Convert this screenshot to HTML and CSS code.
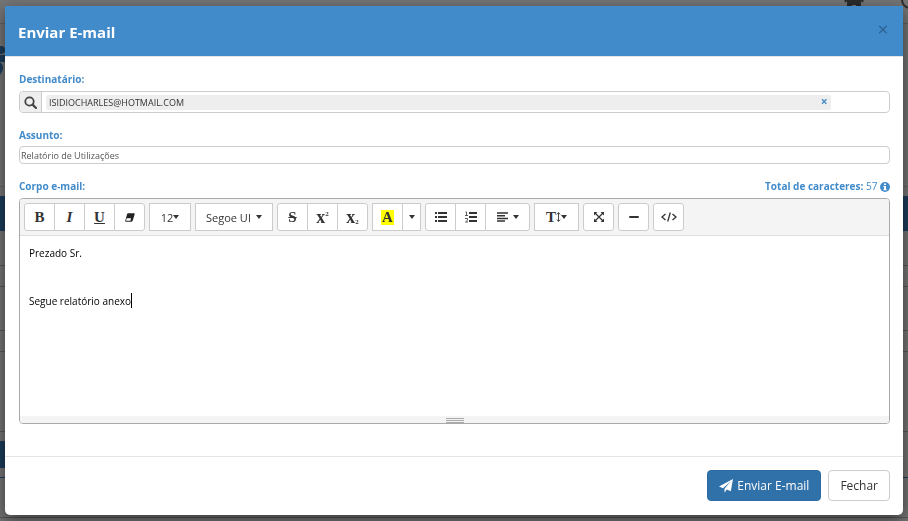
FILE: index.html
```html
<!DOCTYPE html>
<html lang="pt-BR">
<head>
  <meta charset="UTF-8" />
  <meta name="viewport" content="width=device-width, initial-scale=1.0" />
  <title>Enviar E-mail</title>
  <link rel="stylesheet" href="styles.css">
</head>
<body>

  <!-- page behind the modal -->
  <div class="page" aria-hidden="true">
    <div class="page-top">
      <svg class="home-icon" viewBox="0 0 20 18" width="20" height="18"><path d="M10 0 0 9l1.500 1.500L3 9v9h5v-5h4v5h5V9l1.500 1.500L20 9l-3-3V1h-3v2z" fill="#2b2b2b"/></svg>
      <svg class="user-icon" viewBox="0 0 20 20" width="20" height="20"><circle cx="10" cy="10" r="8" fill="none" stroke="#2b2b2b" stroke-width="2"/></svg>
    </div>
    <div class="page-brand">
      <svg viewBox="0 0 8 30" width="8" height="30"><circle cx="1" cy="5" r="4" fill="#1c3c5a"/><path d="M0 10h5v7H0zM0 17q6 5 0 13z" fill="#1c3c5a"/></svg>
    </div>
    <div class="page-bar"></div>
    <div class="page-row row-a"></div>
    <div class="page-row row-b"></div>
    <div class="page-row row-c"></div>
    <div class="page-row row-b"></div>
    <div class="page-row row-d"></div>
    <div class="page-tab"></div>
    <div class="page-row row-e"></div>
    <div class="page-row row-f"></div>
  </div>

  <div class="modal" role="dialog" aria-labelledby="modal-title">
    <div class="modal-header">
      <h4 id="modal-title">Enviar E-mail</h4>
      <button type="button" class="close-btn" aria-label="Fechar">×</button>
    </div>

    <form class="modal-body">
      <label for="destinatario">Destinatário:</label>
      <div class="input-group">
        <span class="addon">
          <svg viewBox="0 0 13 13" width="13" height="13"><circle cx="5.500" cy="5.500" r="4.200" fill="none" stroke="#444" stroke-width="1.800"/><path d="M8.600 8.600 12 12" stroke="#444" stroke-width="2.200" stroke-linecap="round"/></svg>
        </span>
        <div class="tags">
          <div class="tag">
            <span>ISIDIOCHARLES@HOTMAIL.COM</span>
            <button type="button" class="tag-remove" aria-label="Remover">×</button>
          </div>
          <input type="text" id="destinatario">
        </div>
      </div>

      <label for="assunto">Assunto:</label>
      <input type="text" class="subject" id="assunto" value="Relatório de Utilizações">

      <div class="label-row">
        <label for="corpo">Corpo e-mail:</label>
        <p class="counter"><b>Total de caracteres:</b> 57
          <svg viewBox="0 0 10 10" width="10" height="10"><circle cx="5" cy="5" r="5" fill="#428bca"/><path d="M4 1.500h2V3H4zM3.500 4H6v3.200h.7v1H3.400v-1H4V5h-.5z" fill="#fff"/></svg>
        </p>
      </div>

      <div class="editor">
        <div class="toolbar">
          <div class="btn-group">
            <button type="button" class="glyph" title="Negrito">B</button>
            <button type="button" class="glyph" title="Itálico"><i>I</i></button>
            <button type="button" class="glyph" title="Sublinhado"><u>U</u></button>
            <button type="button" title="Remover estilo">
              <svg viewBox="0 0 12 10" width="10" height="9"><path d="M3.500 0H11q1 0 .6 1L9.200 9q-.4 1-1.400 1H1Q0 10 .3 9L2.500 1q.3-1 1-1z" fill="#222"/><path d="M2 6h5.300L6.500 8.800H1.200z" fill="#fff"/></svg>
            </button>
          </div>
          <div class="btn-group square">
            <button type="button" class="size-btn">12<span class="caret"></span></button>
          </div>
          <div class="btn-group square">
            <button type="button" class="font-btn">Segoe UI <span class="caret"></span></button>
          </div>
          <div class="btn-group">
            <button type="button" class="glyph" title="Riscado"><s>S</s></button>
            <button type="button" class="glyph script" title="Sobrescrito">x<sup>2</sup></button>
            <button type="button" class="glyph script" title="Subscrito">x<sub>2</sub></button>
          </div>
          <div class="btn-group square">
            <button type="button" class="glyph" title="Cor"><span class="highlight">A</span></button>
            <button type="button" class="more-btn" title="Mais cores"><span class="caret"></span></button>
          </div>
          <div class="btn-group">
            <button type="button" title="Lista">
              <svg viewBox="0 0 12 10" width="12" height="10"><path d="M0 0h2v2H0zM0 4h2v2H0zM0 8h2v2H0zM3 0h9v2H3zM3 4h9v2H3zM3 8h9v2H3z" fill="#333"/></svg>
            </button>
            <button type="button" title="Lista numerada">
              <svg viewBox="0 0 12 12" width="12" height="12"><path d="M4 1h8v2H4zM4 5h8v2H4zM4 9h8v2H4z" fill="#333"/><path d="M.5 1h1v3.500M0 4.500h3M0 7.500h2.500v1.700L.5 11H3" fill="none" stroke="#333" stroke-width=".8"/></svg>
            </button>
            <button type="button" class="wide-btn" title="Parágrafo">
              <svg viewBox="0 0 12 10" width="12" height="10"><path d="M0 1h11M0 3.700h8M0 6.400h11M0 9h8" stroke="#333" stroke-width="1.500"/></svg>
              <span class="caret spaced"></span>
            </button>
          </div>
          <div class="btn-group square">
            <button type="button" class="glyph wide-btn" title="Altura da linha">T<svg viewBox="0 0 5 10" width="5" height="10"><path d="M2.500 1v8M.8 2.500l1.700-2 1.700 2M.8 7.500l1.700 2 1.700-2" fill="none" stroke="#333" stroke-width=".9"/></svg><span class="caret"></span></button>
          </div>
          <div class="btn-group">
            <button type="button" title="Tela cheia">
              <svg viewBox="0 0 10 10" width="10" height="10"><path d="M1 1l8 8M9 1L1 9" stroke="#333" stroke-width="1.200"/><path d="M0 0h3.400L0 3.400zM10 0v3.400L6.600 0zM0 10V6.600L3.400 10zM10 10H6.600L10 6.600z" fill="#333"/></svg>
            </button>
          </div>
          <div class="btn-group">
            <button type="button" title="Linha horizontal">
              <svg viewBox="0 0 10 10" width="10" height="10"><rect y="4" width="10" height="2" rx="1" fill="#333"/></svg>
            </button>
          </div>
          <div class="btn-group">
            <button type="button" title="Código">
              <svg viewBox="0 0 16 10" width="16" height="10"><path d="M4.500 2 1 5l3.500 3M11.500 2 15 5l-3.500 3M9.300.5l-2.600 9" fill="none" stroke="#333" stroke-width="1.300"/></svg>
            </button>
          </div>
        </div>
        <div class="editable" id="corpo" role="textbox" aria-multiline="true" contenteditable="true">
          <p>Prezado Sr.</p>
          <p><br></p>
          <p>Segue relatório anexo<span class="text-cursor"></span></p>
        </div>
        <div class="statusbar"><span></span><span></span><span></span></div>
      </div>
    </form>

    <div class="modal-footer">
      <button type="button" class="btn btn-primary">
        <svg viewBox="0 0 14 14" width="14" height="14"><path d="M14 0 11.800 12.300 7.800 10.600 5.500 13.800V9.800L11.800 2.300 4 9.200 0 7.600z" fill="#fff"/></svg>
        Enviar E-mail
      </button>
      <button type="button" class="btn">Fechar</button>
    </div>
  </div>

</body>
</html>
```

FILE: styles.css
```css
* {
  margin: 0;
  padding: 0;
  box-sizing: border-box;
}

body {
  min-height: 100vh;
  overflow: hidden;
  background-color: #747474;
  font-family: "Segoe UI", "Open Sans", "Noto Sans", sans-serif;
  font-size: 12px;
  color: #333;
}

button, input {
  font-family: inherit;
  font-size: inherit;
  color: inherit;
}

svg {
  display: block;
  flex: none;
}

/* dimmed page behind the modal */
.page {
  position: fixed;
  inset: 0;
}

.page-top {
  height: 24px;
  border-bottom: 1px solid #606060;
  display: flex;
  justify-content: flex-end;
  align-items: flex-start;
  gap: 36px;
  overflow: hidden;
  margin-right: -12px;
}

.home-icon {
  margin-top: -8px;
}

.user-icon {
  margin-top: -10px;
}

.page-brand {
  height: 163px;
  padding-top: 21px;
  border-bottom: 1px solid #646464;
}

.page-bar {
  height: 35px;
  margin-top: 9px;
  background: #1c3c5a;
}

.page-row {
  border-bottom: 1px solid #565656;
}

.row-a {
  height: 35px;
}

.row-b {
  height: 21px;
}

.row-c {
  height: 44px;
}

.row-d {
  height: 80px;
}

.page-tab {
  width: 50%;
  height: 27px;
  margin-top: 9px;
  background: #1c3c5a;
}

.row-e {
  height: 10px;
  border-color: #1c3c5a;
}

.row-f {
  height: 40px;
}

.modal {
  position: relative;
  margin: 6px 5px;
  background: #fff;
  border-radius: 5px;
  box-shadow: 0 5px 15px rgba(0,0,0,0.5);
}

.modal-header {
  display: flex;
  justify-content: space-between;
  height: 51px;
  padding: 14px 13px;
  background: #428bca;
  border-bottom: 1px solid #e5e5e5;
}

.modal-header h4 {
  font-size: 15px;
  line-height: 24px;
  color: #fff;
}

.close-btn {
  width: 14px;
  height: 18px;
  border: none;
  background: none;
  font-size: 19px;
  line-height: 16px;
  color: #2c6090;
  cursor: pointer;
}

.modal-body {
  padding: 14px 13px 32px 14px;
}

label, .counter {
  display: block;
  font-size: 10px;
  line-height: 16px;
  color: #428bca;
}

label {
  font-weight: bold;
}

.input-group {
  display: flex;
  height: 22px;
  margin: 4px 0 14px;
  border: 1px solid #ccc;
  border-radius: 4px;
  overflow: hidden;
}

.addon {
  display: flex;
  align-items: center;
  justify-content: center;
  width: 22px;
  background: #eee;
  border-right: 1px solid #ccc;
}

.tags {
  flex: 1;
  display: flex;
  align-items: center;
  padding-left: 4px;
}

.tag {
  flex: 27;
  display: flex;
  justify-content: space-between;
  align-items: center;
  height: 15px;
  padding: 0 3px;
  background: #eee;
  border-radius: 2px;
  font-size: 9px;
}

.tag-remove {
  width: 8px;
  border: none;
  background: none;
  font-size: 12px;
  font-weight: bold;
  line-height: 12px;
  color: #428bca;
  cursor: pointer;
}

.tags input {
  flex: 2;
  min-width: 0;
  border: none;
  outline: none;
}

.subject {
  display: block;
  width: 100%;
  height: 18px;
  margin: 3px 0 14px;
  padding: 0 1px;
  border: 1px solid #ccc;
  border-radius: 4px;
  font-size: 9px;
  color: #555;
}

.label-row {
  display: flex;
  justify-content: space-between;
  margin-bottom: 4px;
}

.counter svg {
  display: inline-block;
  vertical-align: -2px;
}

.editor {
  border: 1px solid #a9a9a9;
  border-radius: 4px;
  overflow: hidden;
}

.toolbar {
  display: flex;
  flex-wrap: wrap;
  gap: 4px;
  padding: 4px;
  background: #f4f4f4;
  border-bottom: 1px solid #ddd;
}

.btn-group {
  display: flex;
}

.btn-group button {
  display: flex;
  align-items: center;
  justify-content: center;
  width: 31px;
  height: 28px;
  background: #fff;
  border: 1px solid #ccc;
  font-size: 11px;
  cursor: pointer;
}

.btn-group button + button {
  margin-left: -1px;
}

.btn-group:not(.square) button:first-child {
  border-top-left-radius: 3px;
  border-bottom-left-radius: 3px;
}

.btn-group:not(.square) button:last-child {
  border-top-right-radius: 3px;
  border-bottom-right-radius: 3px;
}

.btn-group .glyph {
  font-family: "Liberation Serif", serif;
  font-size: 15px;
  font-weight: bold;
}

.btn-group .script {
  font-size: 18px;
}

.glyph sup, .glyph sub {
  font-size: 7px;
  line-height: 8px;
}

.glyph sup {
  align-self: flex-start;
  margin-top: 6px;
}

.glyph sub {
  align-self: flex-end;
  margin-bottom: 4px;
}

.highlight {
  padding: 0 1px;
  background: #ff0;
  line-height: 15px;
}

.btn-group .size-btn {
  width: 42px;
}

.btn-group .font-btn {
  width: 78px;
  gap: 5px;
}

.btn-group .more-btn {
  width: 19px;
}

.btn-group .wide-btn {
  width: 45px;
}

.caret {
  border: 3px solid transparent;
  border-top: 4px solid #333;
  border-bottom: none;
}

.caret.spaced {
  margin-left: 4px;
}

.editable {
  height: 180px;
  padding: 9px;
  outline: none;
  font-size: 10px;
  line-height: 16px;
  color: #000;
}

.editable p {
  margin-bottom: 8px;
}

.text-cursor {
  display: inline-block;
  width: 1px;
  height: 15px;
  background: #000;
  vertical-align: -3px;
}

.statusbar {
  display: flex;
  flex-direction: column;
  align-items: center;
  gap: 1px;
  height: 7px;
  padding-top: 2px;
  background: #f4f4f4;
}

.statusbar span {
  width: 18px;
  height: 1px;
  background: #a9a9a9;
}

.modal-footer {
  display: flex;
  justify-content: flex-end;
  gap: 7px;
  padding: 13px 13px 14px;
  border-top: 1px solid #e5e5e5;
}

.btn {
  display: flex;
  align-items: center;
  gap: 4px;
  height: 31px;
  padding: 0 11px;
  background: #fff;
  border: 1px solid #ccc;
  border-radius: 4px;
  font-size: 12px;
  cursor: pointer;
}

.btn-primary {
  background: #3071a9;
  border-color: #2d6ca2;
  color: #fff;
}
```
